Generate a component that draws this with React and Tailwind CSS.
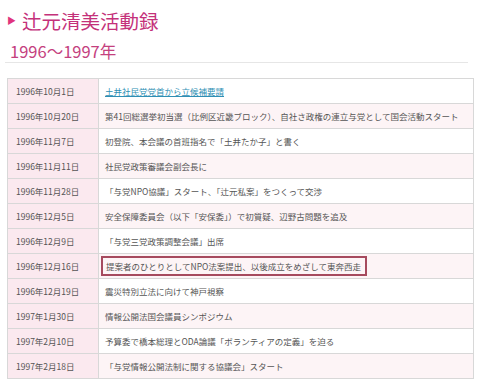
import React from 'react';

const rows = [
    { date: "1996年10月1日", text: "土井社民党党首から立候補要請", link: true },
    { date: "1996年10月20日", text: "第41回総選挙初当選（比例区近畿ブロック）、自社さ政権の連立与党として国会活動スタート" },
    { date: "1996年11月7日", text: "初登院、本会議の首班指名で「土井たか子」と書く" },
    { date: "1996年11月11日", text: "社民党政策審議会副会長に" },
    { date: "1996年11月28日", text: "「与党NPO協議」スタート、「辻元私案」をつくって交渉" },
    { date: "1996年12月5日", text: "安全保障委員会（以下「安保委」）で初質疑、辺野古問題を追及" },
    { date: "1996年12月9日", text: "「与党三党政策調整会議」出席" },
    { date: "1996年12月16日", text: "提案者のひとりとしてNPO法案提出、以後成立をめざして東奔西走", boxed: true },
    { date: "1996年12月19日", text: "震災特別立法に向けて神戸視察" },
    { date: "1997年1月30日", text: "情報公開法国会議員シンポジウム" },
    { date: "1997年2月10日", text: "予算委で橋本総理とODA論議「ボランティアの定義」を迫る" },
    { date: "1997年2月18日", text: "「与党情報公開法制に関する協議会」スタート" },
];

function App() {
    return (
        <div className="w-[480px] h-[380px] overflow-hidden bg-white font-['Noto_Sans_CJK_JP',sans-serif]">
            <div className="flex items-center h-[40px] pl-[7px] pt-[1px]">
                <span className="text-[#e0337d] text-[9px] leading-none mr-[6px]">▶</span>
                <h1 className="text-[19.5px] leading-none text-[#c4317a]">辻元清美活動録</h1>
            </div>
            <div className="mx-[5px] mr-[12px] border-b border-[#e6e6e6] h-[23px] flex items-center pl-[5px]">
                <h2 className="text-[16.5px] leading-none text-[#c4407e]">1996～1997年</h2>
            </div>

            <table className="mt-[15px] ml-[7px] w-[467px] border-collapse border border-[#d8d8d8] text-[8.5px] text-[#555]">
                <tbody>
                    {rows.map((r, i) => (
                        <tr key={r.date} className={i % 2 === 1 ? "bg-[#fdf4f6]" : "bg-white"}>
                            <td className="w-[91px] h-[25px] border border-[#d8d8d8] bg-[#fbe9ef] pl-[8px] py-0">{r.date}</td>
                            <td className="h-[25px] border border-[#d8d8d8] pl-[6px] py-0">
                                {r.link
                                    ? <a href="#" className="text-[#2f8fb4] underline">{r.text}</a>
                                    : r.boxed
                                        ? <span className="inline-block border-2 border-[#a64a5e] pl-[3px] pr-[4px] py-[2px] -ml-[4px]">{r.text}</span>
                                        : r.text}
                            </td>
                        </tr>
                    ))}
                </tbody>
            </table>
        </div>
    );
}

export default App;
